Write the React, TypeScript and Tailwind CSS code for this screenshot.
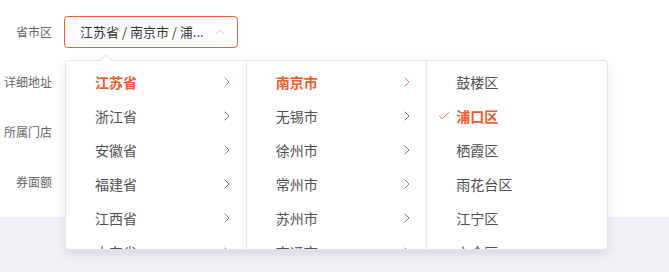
import { Check, ChevronRight, ChevronUp } from "lucide-react";

const provinces = ["江苏省", "浙江省", "安徽省", "福建省", "江西省", "山东省"];
const cities = ["南京市", "无锡市", "徐州市", "常州市", "苏州市", "南通市"];
const districts = ["鼓楼区", "浦口区", "栖霞区", "雨花台区", "江宁区", "六合区"];

const labels = ["省市区", "详细地址", "所属门店", "券面额"];

function Column({
  items,
  active,
  arrow,
  check,
}: {
  items: string[];
  active: number;
  arrow?: boolean;
  check?: boolean;
}) {
  return (
    <div className="h-full flex-1 overflow-hidden border-r border-[#e8e9ee] pt-1 last:border-r-0">
      {items.map((item, i) => {
        const on = i === active;
        return (
          <div
            key={item}
            className={`relative flex h-[34px] items-center pl-[29px] pr-[11px] text-[14px] ${
              on ? "font-bold text-[#f25a2b]" : "text-[#4f4f4f]"
            }`}
          >
            {check && on && (
              <Check size={14} strokeWidth={1.4} className="absolute left-[10px] text-[#f25a2b]" />
            )}
            <span className="flex-1">{item}</span>
            {arrow && (
              <ChevronRight
                size={16}
                strokeWidth={1.3}
                className={on ? "text-[#f25a2b]" : "text-[#666]"}
              />
            )}
          </div>
        );
      })}
    </div>
  );
}

export default function App() {
  return (
    <div
      className="h-[272px] w-[669px] overflow-hidden bg-[#f0f1f5]"
      style={{ fontFamily: '"Noto Sans CJK SC", "Noto Sans", sans-serif' }}
    >
      <div className="flex h-[217px] flex-col gap-[18px] bg-white pt-4">
        {labels.map((label, i) => (
          <div key={label} className="flex h-8 items-center">
            <div className="w-[52px] text-right text-[12px] text-[#666]">{label}</div>
            {i === 0 && (
              <div className="relative ml-3">
                <div className="flex h-8 w-[174px] items-center rounded border border-[#f25a2b] pl-[15px] pr-[9px]">
                  <span className="flex-1 truncate text-[13px] text-[#333]">
                    江苏省 / 南京市 / 浦...
                  </span>
                  <ChevronUp size={16} strokeWidth={1.2} className="text-[#bbb]" />
                </div>
                <div className="absolute left-px top-[44px] z-10 flex h-[190px] w-[543px] rounded border border-[#e4e5ea] bg-white shadow-[0_4px_12px_rgba(0,0,0,0.1)]">
                  <div className="absolute -top-[5px] left-[36px] h-2 w-2 rotate-45 border-l border-t border-[#e4e5ea] bg-white" />
                  <Column items={provinces} active={0} arrow />
                  <Column items={cities} active={0} arrow />
                  <Column items={districts} active={1} check />
                </div>
              </div>
            )}
          </div>
        ))}
      </div>
    </div>
  );
}
